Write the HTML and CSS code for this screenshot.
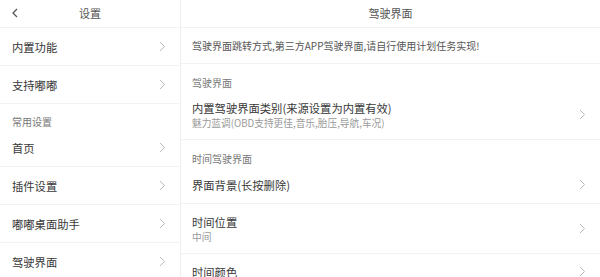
FILE: index.html
```html
<!DOCTYPE html>
<html lang="zh">
<head>
<meta charset="utf-8">
<link rel="stylesheet" href="styles.css">
</head>
<body>
<div class="app">
  <div class="panel left">
    <div class="header">
      <svg class="back" width="8" height="10" viewBox="0 0 8 10"><path d="M6 1 L2 5 L6 9" fill="none" stroke="#555" stroke-width="1.3"/></svg>
      <span class="htitle">设置</span>
    </div>
    <div class="row"><span class="title">内置功能</span><svg class="chev" width="7" height="11" viewBox="0 0 7 11"><path d="M1 1 L5.5 5.5 L1 10" fill="none" stroke="#bbb" stroke-width="1"/></svg></div>
    <div class="row"><span class="title">支持嘟嘟</span><svg class="chev" width="7" height="11" viewBox="0 0 7 11"><path d="M1 1 L5.5 5.5 L1 10" fill="none" stroke="#bbb" stroke-width="1"/></svg></div>
    <div class="section lsec">常用设置</div>
    <div class="row"><span class="title">首页</span><svg class="chev" width="7" height="11" viewBox="0 0 7 11"><path d="M1 1 L5.5 5.5 L1 10" fill="none" stroke="#bbb" stroke-width="1"/></svg></div>
    <div class="row"><span class="title">插件设置</span><svg class="chev" width="7" height="11" viewBox="0 0 7 11"><path d="M1 1 L5.5 5.5 L1 10" fill="none" stroke="#bbb" stroke-width="1"/></svg></div>
    <div class="row"><span class="title">嘟嘟桌面助手</span><svg class="chev" width="7" height="11" viewBox="0 0 7 11"><path d="M1 1 L5.5 5.5 L1 10" fill="none" stroke="#bbb" stroke-width="1"/></svg></div>
    <div class="row"><span class="title">驾驶界面</span><svg class="chev" width="7" height="11" viewBox="0 0 7 11"><path d="M1 1 L5.5 5.5 L1 10" fill="none" stroke="#bbb" stroke-width="1"/></svg></div>
  </div>
  <div class="panel right">
    <div class="header"><span class="htitle">驾驶界面</span></div>
    <div class="note">驾驶界面跳转方式,第三方APP驾驶界面,请自行使用计划任务实现!</div>
    <div class="section rsec">驾驶界面</div>
    <div class="row two">
      <div class="texts"><div class="title">内置驾驶界面类别(来源设置为内置有效)</div><div class="sub">魅力蓝调(OBD支持更佳,音乐,胎压,导航,车况)</div></div>
      <svg class="chev" width="7" height="11" viewBox="0 0 7 11"><path d="M1 1 L5.5 5.5 L1 10" fill="none" stroke="#bbb" stroke-width="1"/></svg>
    </div>
    <div class="section rsec">时间驾驶界面</div>
    <div class="row"><span class="title">界面背景(长按删除)</span><svg class="chev" width="7" height="11" viewBox="0 0 7 11"><path d="M1 1 L5.5 5.5 L1 10" fill="none" stroke="#bbb" stroke-width="1"/></svg></div>
    <div class="row two">
      <div class="texts"><div class="title">时间位置</div><div class="sub">中间</div></div>
      <svg class="chev" width="7" height="11" viewBox="0 0 7 11"><path d="M1 1 L5.5 5.5 L1 10" fill="none" stroke="#bbb" stroke-width="1"/></svg>
    </div>
    <div class="row two">
      <div class="texts"><div class="title">时间颜色</div></div>
      <svg class="chev" width="7" height="11" viewBox="0 0 7 11"><path d="M1 1 L5.5 5.5 L1 10" fill="none" stroke="#bbb" stroke-width="1"/></svg>
    </div>
  </div>
</div>
</body>
</html>
```
FILE: styles.css
```css
html, body {
  margin: 0;
  padding: 0;
  background: #fff;
  overflow: hidden;
}
body {
  font-family: "Noto Sans CJK SC", "Noto Sans", sans-serif;
  color: #333;
}
.app {
  display: flex;
  width: 600px;
  height: 277px;
  overflow: hidden;
}
.panel {
  display: flex;
  flex-direction: column;
}
.left {
  width: 180px;
  flex: none;
  border-right: 1px solid #efefef;
}
.right {
  flex: 1;
  min-width: 0;
}
.header {
  height: 27px;
  border-bottom: 1px solid #f3f3f3;
  display: flex;
  align-items: center;
  justify-content: center;
  position: relative;
  flex: none;
}
.htitle {
  font-size: 11px;
  color: #555;
  line-height: 14px;
  margin-top: -1px;
}
.back {
  position: absolute;
  left: 11px;
  top: 8px;
}
.row {
  display: flex;
  align-items: center;
  justify-content: space-between;
  padding: 10.5px 14px 10.5px 12px;
  border-bottom: 1px solid #f3f3f3;
  flex: none;
}
.right .row {
  padding-left: 11px;
}
.row.two {
  padding-top: 9.5px;
  padding-bottom: 9.5px;
}
.title {
  font-size: 11.3px;
  line-height: 16px;
  color: #383838;
  white-space: nowrap;
}
.sub {
  font-size: 9.7px;
  line-height: 14px;
  color: #9a9a9a;
  white-space: nowrap;
}
.chev {
  flex: none;
}
.section {
  font-size: 10px;
  line-height: 14px;
  color: #777;
  padding-left: 12px;
  flex: none;
}
.lsec {
  padding-top: 11px;
}
.rsec {
  padding-top: 12px;
  padding-left: 11px;
}
.note {
  font-size: 10px;
  line-height: 16px;
  color: #555;
  padding: 9.5px 11px;
  border-bottom: 1px solid #f3f3f3;
  white-space: nowrap;
  flex: none;
}
```
